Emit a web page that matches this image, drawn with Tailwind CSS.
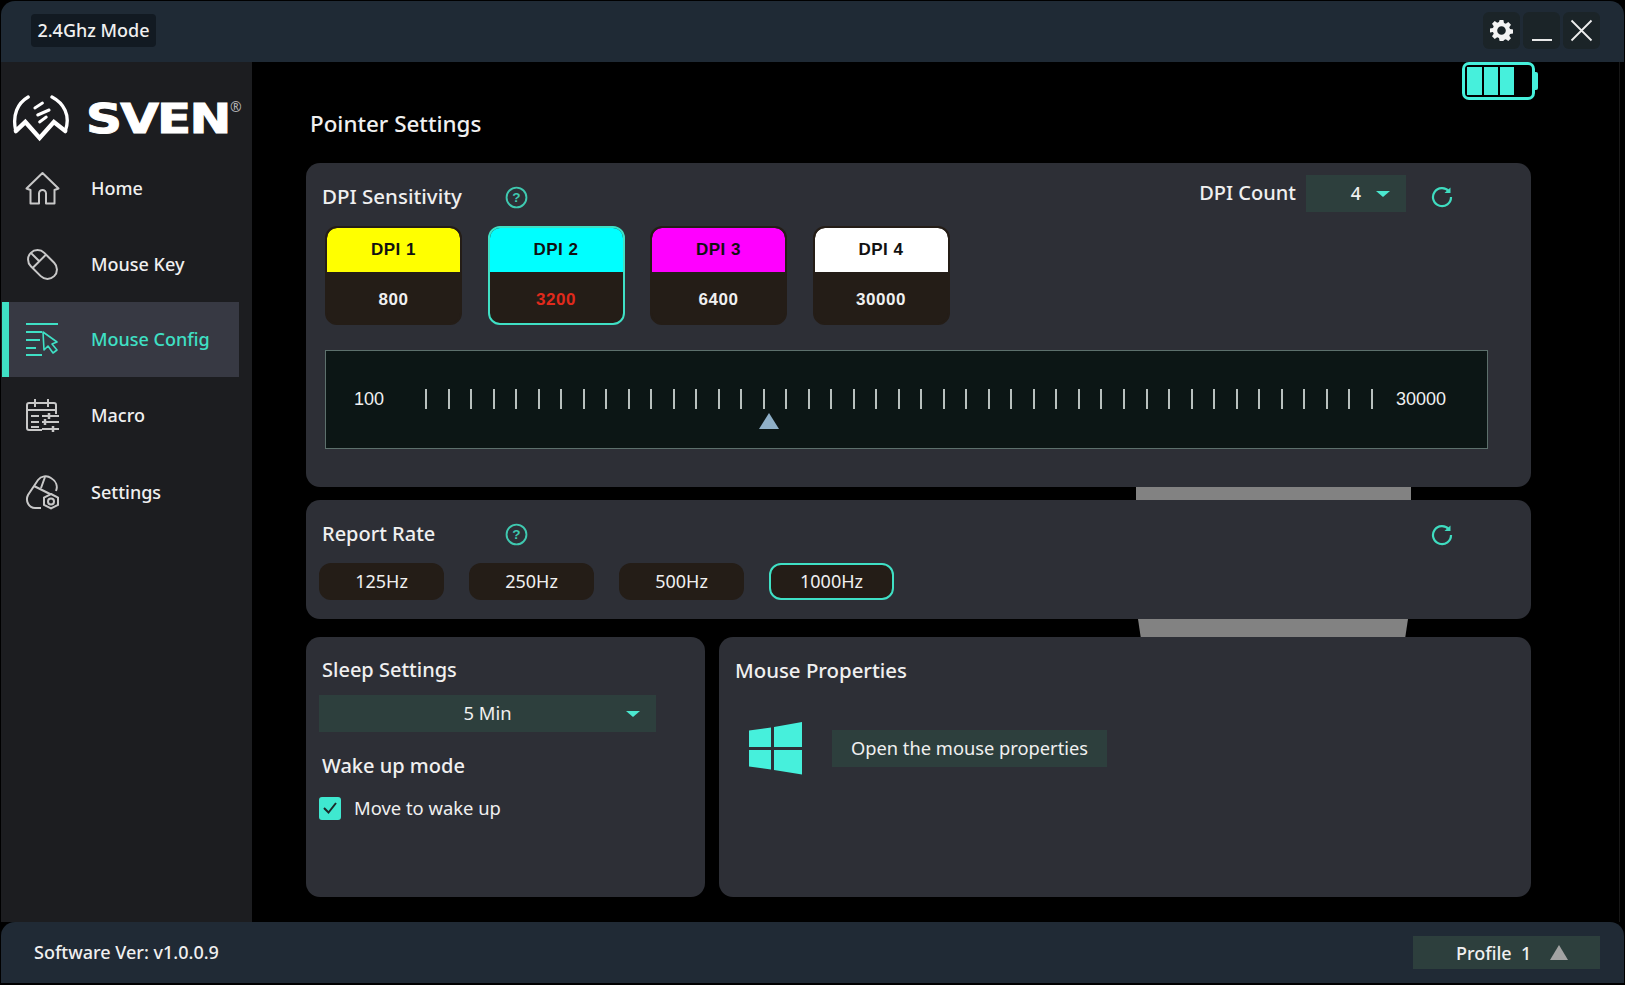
<!DOCTYPE html>
<html lang="en">
<head>
  <meta charset="UTF-8" />
  <title>SVEN Pointer Settings</title>
  <script src="https://cdn.jsdelivr.net/npm/@tailwindcss/browser@4"></script>
</head>
<body class="bg-black font-['Noto_Sans',sans-serif] text-[#f0f0f0] overflow-hidden">
  <div class="w-[1625px] h-[985px] flex flex-col">
    <!-- Title bar -->
    <div class="h-[61px] mt-px mx-px rounded-t-[14px] bg-[#1f2a35] flex items-center justify-between pl-[30px] pr-[24px] shrink-0">
      <div class="h-[33px] w-[125px] -mt-[2px] bg-[#121a22] rounded-[4px] flex items-center justify-center text-[18px] font-medium">2.4Ghz Mode</div>
      <div class="flex gap-[3px] -mt-[2px]">
        <div class="w-[37px] h-[37px] rounded-[6px] bg-[#1b2428] flex items-center justify-center">
          <svg width="23" height="23" viewBox="0 0 24 24" fill="#f4f4f4"><path fill-rule="evenodd" d="M10 1h4l.6 3.1 1.9.8 2.6-1.8 2.8 2.8-1.8 2.6.8 1.9 3.1.6v4l-3.1.6-.8 1.9 1.8 2.6-2.8 2.8-2.6-1.8-1.9.8L14 23h-4l-.6-3.1-1.9-.8-2.6 1.8-2.8-2.8 1.8-2.6-.8-1.9L0 14v-4l3.1-.6.8-1.9-1.8-2.6 2.8-2.8 2.6 1.8 1.9-.8zM12 7.500a4.500 4.500 0 1 0 0 9 4.500 4.500 0 0 0 0-9z"/></svg>
        </div>
        <div class="w-[37px] h-[37px] rounded-[6px] bg-[#1b2428] flex items-end justify-center pb-[8px]">
          <div class="w-[20px] h-[2px] bg-[#e8e8e8]"></div>
        </div>
        <div class="w-[37px] h-[37px] rounded-[6px] bg-[#1b2428] flex items-center justify-center">
          <svg width="23" height="23" viewBox="0 0 23 23" stroke="#eeeeee" stroke-width="1.800" fill="none"><path d="M1.500 1.500l20 20M21.500 1.500l-20 20"/></svg>
        </div>
      </div>
    </div>

    <div class="flex flex-1 min-h-0 relative">
      <!-- Sidebar -->
      <div class="w-[251px] ml-px bg-[#1c1d20] shrink-0">
        <div class="h-[88px] relative">
          <svg class="absolute left-[11px] top-[33px]" width="59" height="48" viewBox="0 0 62 48" preserveAspectRatio="none" fill="none" stroke="#ffffff" stroke-linecap="round" stroke-linejoin="miter">
            <path d="M17 2C6 8 0 20 4 36" stroke-width="3.500"/>
            <path d="M42 2C54 8 62 20 56 36" stroke-width="3.500"/>
            <path d="M4 36l10-9 15 16 15-16 12 9" stroke-width="4.500"/>
            <path d="M24 13l8-5M27 20l12-5M29 27l7-5" stroke-width="3"/>
          </svg>
          <div class="absolute left-[85px] top-[32px] text-[41px] leading-[50px] font-['DejaVu_Sans',sans-serif] font-bold text-white origin-left scale-x-[1.22] tracking-[-1.5px] [-webkit-text-stroke:1px_white]">SVEN</div>
          <div class="absolute left-[229px] top-[38px] text-[14px] leading-[14px] text-[#b0b0b0]">®</div>
        </div>
        <nav class="text-[18px] font-medium">
          <div class="h-[76px] flex items-center pl-[24px] gap-[31px]">
            <svg width="35" height="35" viewBox="0 0 35 35" fill="none" stroke="#c8c8c8" stroke-width="2" stroke-linejoin="round"><path d="M17.500 2L1.500 17.500l4 1.500v13.500h8.500V22.500a3.500 3.500 0 0 1 7 0v10h8.500V19l4-1.500z"/></svg>
            <span>Home</span>
          </div>
          <div class="h-[76px] flex items-center pl-[24px] gap-[31px]">
            <svg width="35" height="35" viewBox="0 0 35 35" fill="none" stroke="#c8c8c8" stroke-width="2"><g transform="rotate(-45 17.500 17.500)"><rect x="8" y="1" width="19" height="33" rx="9.500"/><path d="M8 13h19M17.500 1v12"/></g></svg>
            <span>Mouse Key</span>
          </div>
          <div class="h-[75px] ml-px w-[237px] bg-[#373943] border-l-[7px] border-[#3fe0c5] flex items-center pl-[16px] gap-[31px] text-[#3fe0c5]">
            <svg width="35" height="35" viewBox="0 0 35 35" fill="none" stroke="#3fe0c5" stroke-width="2.200"><path d="M1 2h32M1 10h16M1 18h14M1 26h10M1 33h16" /><path d="M18 10l1 18 4-4 5 7 4-3-5-6 5-2z" stroke-width="1.600" stroke-linejoin="round"/></svg>
            <span>Mouse Config</span>
          </div>
          <div class="h-[77px] flex items-center pl-[24px] gap-[31px]">
            <svg width="35" height="35" viewBox="0 0 35 35" fill="none" stroke="#c8c8c8" stroke-width="2"><path d="M17 32H4a2 2 0 0 1-2-2V7a2 2 0 0 1 2-2h25a2 2 0 0 1 2 2v9"/><path d="M2 12h29M10 1v8M23 1v8M6 18h8M6 24h8M6 29h8M17 18h17M17 24h17M17 31h17"/><path d="M24 15v6M20 21v6M28 28v6" stroke-width="2.500"/></svg>
            <span>Macro</span>
          </div>
          <div class="h-[76px] flex items-center pl-[24px] gap-[31px]">
            <svg width="35" height="35" viewBox="0 0 35 35" fill="none" stroke="#c8c8c8" stroke-width="2"><path d="M16 33H10C4 33 0 26 3 20L13 5C16 1 22 0 26 3C31 6 33 11 31 16"/><path d="M9 11L27 20M20 2L16 13"/><path d="M26 19l7 3.500v7.500l-7 3.500-7-3.500v-7.500z" fill="#1c1d20"/><circle cx="26" cy="26.500" r="3"/></svg>
            <span>Settings</span>
          </div>
        </nav>
      </div>

      <!-- Main column -->
      <div class="ml-[54px] w-[1225px] relative text-[20px] font-medium">
        <div class="h-[101px] pt-[44px] text-[22.400px] leading-[36px] pl-[4px]">Pointer Settings</div>

        <!-- DPI card -->
        <div class="h-[324px] bg-[#2d2f36] rounded-[14px] pl-[20px] pt-[18px] relative">
          <div class="flex items-center h-[30px]">
            <span class="w-[183px] -ml-[4px] text-[20.500px]">DPI Sensitivity</span>
            <svg class="mt-[2px]" width="23" height="23" viewBox="0 0 22 22" fill="none" stroke="#3fc9b0" stroke-width="1.800"><circle cx="11" cy="11" r="9.500"/><text x="11" y="15.500" text-anchor="middle" font-size="13" font-weight="700" fill="#3fc9b0" stroke="none" font-family="Liberation Sans">?</text></svg>
          </div>
          <div class="absolute right-[78px] top-[12px] flex items-center h-[37px]">
            <span class="mr-[10px] -mt-[1px]">DPI Count</span>
            <div class="w-[100px] h-[37px] bg-[#2d3f3d] flex items-center justify-end pr-[16px] gap-[15px] text-[18px]">
              <span>4</span>
              <div class="w-0 h-0 border-x-[7px] border-x-transparent border-t-[6px] border-t-[#4be8d0]"></div>
            </div>
            <svg class="ml-[25px] mt-[7px]" width="22" height="22" viewBox="0 0 22 22" fill="none" stroke="#3fdcc0" stroke-width="2.200"><path d="M18 5.500A9 9 0 1 0 20 11"/><path d="M19.500 1.500v5.500h-6z" fill="#3fdcc0" stroke="none"/></svg>
          </div>
          <!-- DPI tiles -->
          <div class="flex gap-[25.500px] mt-[15px] -ml-[1px] font-['Liberation_Sans',sans-serif] font-bold text-[17px] tracking-[0.5px] text-center">
            <div class="w-[137px] h-[99px] rounded-[12px] bg-[#241d17] overflow-hidden border-2 border-[#241d17]">
              <div class="h-[44px] bg-[#ffff00] text-[#111111] leading-[44px] rounded-t-[10px]">DPI 1</div>
              <div class="leading-[55px] text-[#f0f0f0]">800</div>
            </div>
            <div class="w-[137px] h-[99px] rounded-[12px] bg-[#241d17] overflow-hidden border-2 border-[#3fe0c5]">
              <div class="h-[44px] bg-[#00ffff] text-[#111111] leading-[44px]">DPI 2</div>
              <div class="leading-[55px] text-[#e02a1c]">3200</div>
            </div>
            <div class="w-[137px] h-[99px] rounded-[12px] bg-[#241d17] overflow-hidden border-2 border-[#241d17]">
              <div class="h-[44px] bg-[#ff00ff] text-[#111111] leading-[44px] rounded-t-[10px]">DPI 3</div>
              <div class="leading-[55px] text-[#f0f0f0]">6400</div>
            </div>
            <div class="w-[137px] h-[99px] rounded-[12px] bg-[#241d17] overflow-hidden border-2 border-[#241d17]">
              <div class="h-[44px] bg-[#ffffff] text-[#111111] leading-[44px] rounded-t-[10px]">DPI 4</div>
              <div class="leading-[55px] text-[#f0f0f0]">30000</div>
            </div>
          </div>
          <!-- Slider -->
          <div class="mt-[25px] -ml-px w-[1163px] h-[99px] bg-[#0c1615] border border-[#5d706c] relative flex items-center font-['Liberation_Sans',sans-serif] font-normal text-[18px]">
            <span class="absolute left-[28px] top-[38px] leading-[20px]">100</span>
            <div id="ticks" class="absolute left-[99px] top-[38px] w-[948px] h-[20px] flex justify-between"></div>
            <div class="absolute left-[433px] top-[62px] w-0 h-0 border-x-[10px] border-x-transparent border-b-[16px] border-b-[#8fb0c8]"></div>
            <span class="absolute right-[41px] top-[38px] leading-[20px]">30000</span>
          </div>
        </div>

        <div class="h-[13px]"><div class="ml-[830px] w-[275px] h-full bg-[#828282]"></div></div>

        <!-- Report rate card -->
        <div class="h-[119px] bg-[#2d2f36] rounded-[14px] pl-[16px] pt-[19px] relative">
          <div class="flex items-center h-[30px]">
            <span class="w-[183px]">Report Rate</span>
            <svg width="23" height="23" viewBox="0 0 22 22" fill="none" stroke="#3fc9b0" stroke-width="1.800"><circle cx="11" cy="11" r="9.500"/><text x="11" y="15.500" text-anchor="middle" font-size="13" font-weight="700" fill="#3fc9b0" stroke="none" font-family="Liberation Sans">?</text></svg>
          </div>
          <svg class="absolute left-[1125px] top-[24px]" width="22" height="22" viewBox="0 0 22 22" fill="none" stroke="#3fdcc0" stroke-width="2.200"><path d="M18 5.500A9 9 0 1 0 20 11"/><path d="M19.500 1.500v5.500h-6z" fill="#3fdcc0" stroke="none"/></svg>
          <div class="flex gap-[25px] mt-[14px] text-[18px] font-normal -ml-[3px] text-center">
            <div class="w-[125px] h-[37px] leading-[37px] rounded-[12px] bg-[#241d17]">125Hz</div>
            <div class="w-[125px] h-[37px] leading-[37px] rounded-[12px] bg-[#241d17]">250Hz</div>
            <div class="w-[125px] h-[37px] leading-[37px] rounded-[12px] bg-[#241d17]">500Hz</div>
            <div class="w-[125px] h-[37px] leading-[33px] rounded-[12px] bg-[#241d17] border-2 border-[#3fe0c5]">1000Hz</div>
          </div>
        </div>

        <div class="h-[18px]"><div class="ml-[832px] w-[270px] h-full bg-[#828282] [clip-path:polygon(0_0,100%_0,99%_100%,1%_100%)]"></div></div>

        <!-- Bottom cards -->
        <div class="h-[260px] flex gap-[14px]">
          <div class="w-[399px] bg-[#2d2f36] rounded-[14px] pl-[16px]">
            <div class="h-[58px] leading-[66px]">Sleep Settings</div>
            <div class="-ml-[3px] w-[337px] h-[37px] bg-[#2d3f3d] relative flex items-center justify-center text-[18.400px] font-normal pb-[2px]">
              5 Min
              <div class="absolute right-[16px] top-[16px] w-0 h-0 border-x-[7px] border-x-transparent border-t-[6px] border-t-[#4be8d0]"></div>
            </div>
            <div class="mt-[16px] h-[36px] leading-[36px]">Wake up mode</div>
            <div class="mt-[12px] -ml-[3px] flex items-center gap-[13px] text-[18.400px] font-normal h-[24px]">
              <div class="w-[22px] h-[23px] rounded-[3px] bg-[#3fe8d0] flex items-center justify-center">
                <svg width="16" height="14" viewBox="0 0 16 14" fill="none" stroke="#1c2a2a" stroke-width="2"><path d="M2 7l4.500 4.500L14 2"/></svg>
              </div>
              <span>Move to wake up</span>
            </div>
          </div>
          <div class="w-[812px] bg-[#2d2f36] rounded-[14px] pl-[16px]">
            <div class="h-[58px] leading-[66px] text-[20.400px]">Mouse Properties</div>
            <div class="flex items-center gap-[30px] mt-[26px] pl-[13px]">
              <svg width="54" height="54" viewBox="0 0 54 54" fill="#46f0dc"><path d="M1 9.500L23 6.500V26H1zM26 6L54 1v25H26zM1 29h22v19.500L1 45.500zM26 29h28v24.500L26 49z"/></svg>
              <div class="w-[275px] h-[37px] bg-[#2d3f3d] flex items-center justify-center text-[18.300px] font-normal">Open the mouse properties</div>
            </div>
          </div>
        </div>

        <!-- Battery -->
        <div class="absolute left-[1156px] top-0 flex items-center">
          <div class="w-[73px] h-[38px] border-[3px] border-[#46f0dc] rounded-[7px] flex gap-[2px] p-[2px]">
            <div class="w-[15px] bg-[#46f0dc]"></div>
            <div class="w-[14px] bg-[#46f0dc]"></div>
            <div class="w-[14px] bg-[#46f0dc]"></div>
          </div>
          <div class="w-[3px] h-[18px] bg-[#46f0dc] rounded-r-[2px]"></div>
        </div>
      </div>
      <div class="absolute right-[5px] top-0 bottom-0 w-px bg-[#161616]"></div>
    </div>

    <!-- Status bar -->
    <div class="h-[61px] mb-[2px] mx-px rounded-t-[14px] bg-[#202a35] flex items-center justify-between pl-[33px] pr-[24px] shrink-0 text-[18px] font-medium">
      <span>Software Ver: v1.0.0.9</span>
      <div class="w-[187px] h-[33px] bg-[#2d3f3d] flex items-center pl-[43px]">
        <span class="w-[94px] mt-[1px]">Profile&nbsp; 1</span>
        <div class="w-0 h-0 border-x-[9px] border-x-transparent border-b-[15px] border-b-[#a3a3a3]"></div>
      </div>
    </div>
  </div>
  <script>
    // DPI scale has 43 marks, no point writing them out by hand
    const ticks = document.getElementById("ticks");
    for (let i = 0; i < 43; i++) {
      const t = document.createElement("div");
      t.className = "w-[2px] h-[20px] bg-[#b8c0bd]";
      ticks.appendChild(t);
    }
  </script>
</body>
</html>
